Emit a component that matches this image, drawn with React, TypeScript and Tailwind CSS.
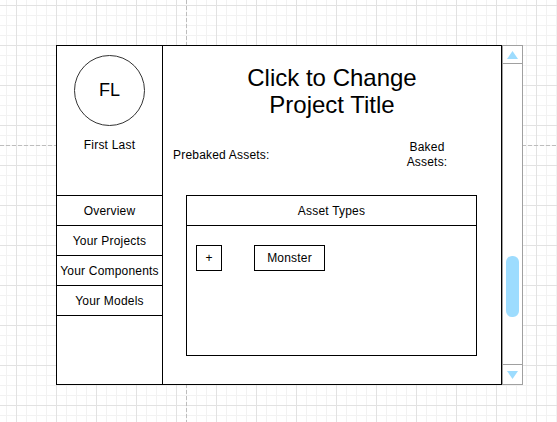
import React from 'react';

// 사이드바 메뉴 항목
const navItems = ['Overview', 'Your Projects', 'Your Components', 'Your Models'];

function Triangle({ down = false }: { down?: boolean }) {
  return (
    <svg width="11" height="8" viewBox="0 0 11 8">
      {down ? (
        <polygon points="0,0 11,0 5.5,8" fill="#9ddcfe" />
      ) : (
        <polygon points="5.5,0 11,8 0,8" fill="#9ddcfe" />
      )}
    </svg>
  );
}

function Scrollbar() {
  return (
    <div className="w-[21px] h-[340px] border border-[#a0a0a0] bg-white flex flex-col">
      <div className="h-[18px] border-b border-[#a0a0a0] flex items-center justify-center">
        <Triangle />
      </div>
      <div className="flex-1 pt-[192px] px-[2px]">
        <div className="h-[61px] w-[13px] mx-auto rounded-[6px] bg-[#9ddcfe]" />
      </div>
      <div className="h-[20px] border-t border-[#a0a0a0] flex items-center justify-center">
        <Triangle down />
      </div>
    </div>
  );
}

function Sidebar() {
  return (
    <div className="w-[106px] border-r border-black flex flex-col">
      <div className="h-[150px] border-b border-black flex flex-col items-center pt-[9px]">
        <div className="w-[71px] h-[71px] rounded-full border border-[#333] flex items-center justify-center text-[18px]">
          FL
        </div>
        <div className="mt-[12px] text-[12px] leading-[15px] tracking-[0.2px]">First Last</div>
      </div>
      {navItems.map((item) => (
        <div
          key={item}
          className="h-[30px] border-b border-black flex items-center justify-center text-[12px] tracking-[0.2px] whitespace-nowrap"
        >
          {item}
        </div>
      ))}
    </div>
  );
}

export default function App() {
  return (
    <div className="relative w-[557px] h-[422px] overflow-hidden bg-white font-['Liberation_Sans',Arial,sans-serif] text-black [background-image:linear-gradient(to_right,#e2e2e2_1px,transparent_1px),linear-gradient(to_bottom,#e2e2e2_1px,transparent_1px),linear-gradient(to_right,#f2f2f2_1px,transparent_1px),linear-gradient(to_bottom,#f2f2f2_1px,transparent_1px)] [background-size:40px_40px,40px_40px,10px_10px,10px_10px] [background-position:16px_5px,16px_5px,6px_5px,6px_5px]">
      {/* 가이드 점선 */}
      <div className="absolute left-0 right-0 top-[145px] h-px bg-[repeating-linear-gradient(to_right,#bdbdbd_0_4px,transparent_4px_6px)]" />
      <div className="absolute top-0 bottom-0 left-[186px] w-px bg-[repeating-linear-gradient(to_bottom,#bdbdbd_0_4px,transparent_4px_6px)]" />

      <div className="relative flex items-start pt-[45px] pl-[56px]">
        <div className="w-[446px] h-[340px] border border-black bg-white flex">
          <Sidebar />

          <div className="flex-1 flex flex-col">
            <div className="pt-[18px] text-center text-[24px] leading-[27px]">
              Click to Change
              <br />
              Project Title
            </div>

            <div className="mt-[22px] h-[30px] flex items-center justify-between pl-[10px] pr-[44px] text-[12px] leading-[15px] tracking-[0.2px]">
              <span>Prebaked Assets:</span>
              <span className="w-[60px] text-center">
                Baked
                <br />
                Assets:
              </span>
            </div>

            <div className="mt-[25px] ml-[23px] w-[291px] h-[161px] border border-black flex flex-col">
              <div className="h-[30px] border-b border-black flex items-center justify-center text-[12px] tracking-[0.2px]">
                Asset Types
              </div>
              <div className="flex items-start gap-[32px] pt-[19px] pl-[9px]">
                <div className="w-[26px] h-[26px] border border-black flex items-center justify-center text-[12px]">
                  +
                </div>
                <div className="w-[71px] h-[26px] border border-black flex items-center justify-center text-[12px] tracking-[0.2px]">
                  Monster
                </div>
              </div>
            </div>
          </div>
        </div>

        <Scrollbar />
      </div>
    </div>
  );
}
